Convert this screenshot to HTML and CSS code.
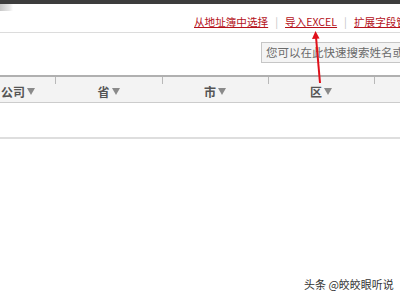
FILE: index.html
```html
<!DOCTYPE html>
<html>
<head>
<meta charset="utf-8">
<link rel="stylesheet" href="styles.css">
</head>
<body>
<div class="page">
  <div class="topbar"><span class="tab-shadow"></span></div>
  <div class="toolbar">
    <a class="link" href="#">从地址簿中选择</a>
    <span class="sep">|</span>
    <a class="link" href="#">导入EXCEL</a>
    <span class="sep">|</span>
    <a class="link" href="#">扩展字段管理</a>
  </div>
  <div class="search-row">
    <div class="search-box">您可以在此快速搜索姓名或联系方式</div>
  </div>
  <div class="table">
    <div class="thead">
      <div class="th first"><span>公司</span><i class="caret"></i></div>
      <div class="th"><span>省</span><i class="caret"></i></div>
      <div class="th"><span>市</span><i class="caret"></i></div>
      <div class="th"><span>区</span><i class="caret"></i></div>
      <div class="th"></div>
    </div>
    <div class="row"></div>
  </div>
  <svg class="arrow" width="20" height="60" viewBox="0 0 20 60">
    <line x1="12" y1="52" x2="8" y2="6" stroke="#e0101a" stroke-width="2"/>
    <polygon points="7.5,0 4,8 11.5,7.5" fill="#e0101a"/>
  </svg>
  <div class="watermark">头条 @皎皎眼听说</div>
</div>
</body>
</html>
```

FILE: styles.css
```css
html, body {
  margin: 0;
  padding: 0;
  background: #ffffff;
}
body {
  width: 400px;
  height: 300px;
  overflow: hidden;
  font-family: "Noto Sans CJK SC", "Liberation Sans", sans-serif;
}
.page {
  position: relative;
  width: 400px;
  height: 300px;
  overflow: hidden;
}
.topbar {
  height: 4px;
  background: #3d3d3d;
  position: relative;
}
.tab-shadow {
  position: absolute;
  left: 0;
  top: 4px;
  width: 13px;
  height: 7px;
  background: linear-gradient(to right, #c8c8c8, #e6e6e6 70%, #ffffff);
}
.toolbar {
  display: flex;
  align-items: flex-end;
  box-sizing: border-box;
  height: 29px;
  padding-left: 194px;
  padding-bottom: 3px;
  border-bottom: 1px solid #dcdcdc;
  white-space: nowrap;
  font-size: 10.6px;
  line-height: 14px;
}
.link {
  color: #b5121b;
  text-decoration: underline;
  flex: none;
}
.link.excel {
  letter-spacing: -0.2px;
}
.sep {
  color: #c4c4c4;
  margin: 0 7px;
  flex: none;
}
.search-row {
  padding-left: 261px;
  padding-top: 9px;
}
.search-box {
  width: 200px;
  height: 21px;
  box-sizing: border-box;
  border: 1px solid #c6c6c6;
  background: #f4f4f4;
  color: #6a6a6a;
  font-size: 11.5px;
  line-height: 19px;
  padding-left: 4px;
  white-space: nowrap;
  overflow: hidden;
}
.table {
  margin-top: 12px;
  width: 480px;
}
.thead {
  display: flex;
  height: 28px;
  box-sizing: border-box;
  border-top: 2px solid #b0b0b0;
  border-bottom: 1px solid #cccccc;
  background: #f3f3f3;
}
.th {
  width: 106px;
  flex: none;
  display: flex;
  align-items: center;
  justify-content: center;
  padding-top: 3px;
  box-sizing: border-box;
  font-size: 12px;
  font-weight: bold;
  color: #555555;
  background-image: linear-gradient(#b8b8b8, #b8b8b8);
  background-size: 1px 7px;
  background-repeat: no-repeat;
  background-position: left top;
}
.th.first {
  width: 55px;
  justify-content: flex-end;
  padding-right: 20px;
  background-image: none;
}
.th:nth-child(2) {
  width: 107px;
}
.caret {
  display: inline-block;
  width: 0;
  height: 0;
  border-left: 4px solid transparent;
  border-right: 4px solid transparent;
  border-top: 7px solid #8a8a8a;
  margin-left: 2px;
}
.row {
  height: 36px;
  border-bottom: 2px solid #dedede;
  box-sizing: border-box;
}
.arrow {
  position: absolute;
  left: 308px;
  top: 31px;
}
.watermark {
  position: absolute;
  left: 304px;
  top: 276px;
  font-size: 11px;
  line-height: 16px;
  color: #333333;
  white-space: nowrap;
}
```
